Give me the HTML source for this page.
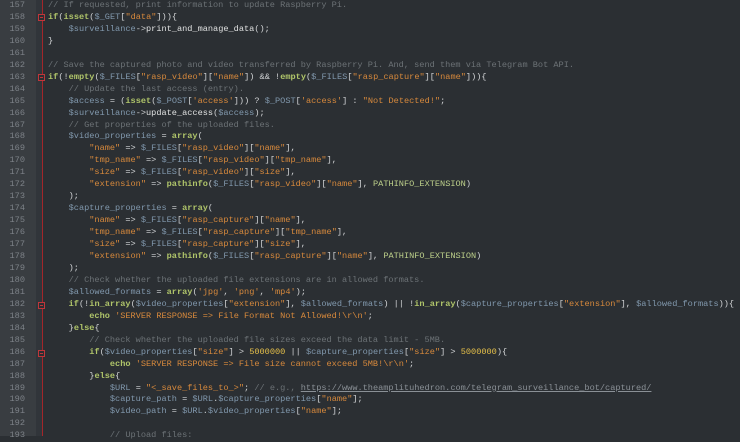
<!DOCTYPE html>
<html><head><meta charset="utf-8"><style>
html,body{margin:0;padding:0;width:740px;height:436px;overflow:hidden;background:#2b2f33;}
#g{position:absolute;left:0;top:0;width:36px;height:436px;background:#393d41;}
#g2{position:absolute;left:36px;top:0;width:6px;height:436px;background:#31353a;}
#rl{position:absolute;left:42px;top:0;width:1px;height:436px;background:#a3262a;}
.ln{position:absolute;left:0;width:25px;text-align:right;color:#7d8288;font:8.6px/11.95px "Liberation Mono",monospace;}
.fb{position:absolute;left:38px;width:7px;height:7px;border:1px solid #c0363a;background:#2b2f33;box-sizing:border-box;}
.fb:after{content:"";position:absolute;left:1px;top:2px;width:3px;height:1px;background:#c0363a;}
pre{position:absolute;left:48px;top:0;margin:0;font:8.6px/11.95px "Liberation Mono",monospace;color:#d2d4d6;tab-size:4;white-space:pre;}
.k{color:#b0c56a;font-weight:bold}.v{color:#8198ad}.s{color:#d7893c}.c{color:#6c7276}.n{color:#e8c24a}.f{color:#dfe0e0}.C{color:#bccf8a}.u{color:#8a9096;text-decoration:underline}
</style></head><body>
<div id="g"></div><div id="g2"></div><div id="rl"></div>
<div class="ln" style="top:0">157<br>158<br>159<br>160<br>161<br>162<br>163<br>164<br>165<br>166<br>167<br>168<br>169<br>170<br>171<br>172<br>173<br>174<br>175<br>176<br>177<br>178<br>179<br>180<br>181<br>182<br>183<br>184<br>185<br>186<br>187<br>188<br>189<br>190<br>191<br>192<br>193</div>
<div class="fb" style="top:14px"></div>
<div class="fb" style="top:74px"></div>
<div class="fb" style="top:302px"></div>
<div class="fb" style="top:350px"></div>
<pre><span class="c">// If requested, print information to update Raspberry Pi.</span>
<span class="k">if</span>(<span class="k">isset</span>(<span class="v">$_GET</span>[<span class="s">"data"</span>])){
	<span class="v">$surveillance</span>-&gt;<span class="f">print_and_manage_data</span>();
}

<span class="c">// Save the captured photo and video transferred by Raspberry Pi. And, send them via Telegram Bot API.</span>
<span class="k">if</span>(!<span class="k">empty</span>(<span class="v">$_FILES</span>[<span class="s">"rasp_video"</span>][<span class="s">"name"</span>]) &amp;&amp; !<span class="k">empty</span>(<span class="v">$_FILES</span>[<span class="s">"rasp_capture"</span>][<span class="s">"name"</span>])){
	<span class="c">// Update the last access (entry).</span>
	<span class="v">$access</span> = (<span class="k">isset</span>(<span class="v">$_POST</span>[<span class="s">'access'</span>])) ? <span class="v">$_POST</span>[<span class="s">'access'</span>] : <span class="s">"Not Detected!"</span>;
	<span class="v">$surveillance</span>-&gt;<span class="f">update_access</span>(<span class="v">$access</span>);
	<span class="c">// Get properties of the uploaded files.</span>
	<span class="v">$video_properties</span> = <span class="k">array</span>(
		<span class="s">"name"</span> =&gt; <span class="v">$_FILES</span>[<span class="s">"rasp_video"</span>][<span class="s">"name"</span>],
		<span class="s">"tmp_name"</span> =&gt; <span class="v">$_FILES</span>[<span class="s">"rasp_video"</span>][<span class="s">"tmp_name"</span>],
		<span class="s">"size"</span> =&gt; <span class="v">$_FILES</span>[<span class="s">"rasp_video"</span>][<span class="s">"size"</span>],
		<span class="s">"extension"</span> =&gt; <span class="k">pathinfo</span>(<span class="v">$_FILES</span>[<span class="s">"rasp_video"</span>][<span class="s">"name"</span>], <span class="C">PATHINFO_EXTENSION</span>)
	);
	<span class="v">$capture_properties</span> = <span class="k">array</span>(
		<span class="s">"name"</span> =&gt; <span class="v">$_FILES</span>[<span class="s">"rasp_capture"</span>][<span class="s">"name"</span>],
		<span class="s">"tmp_name"</span> =&gt; <span class="v">$_FILES</span>[<span class="s">"rasp_capture"</span>][<span class="s">"tmp_name"</span>],
		<span class="s">"size"</span> =&gt; <span class="v">$_FILES</span>[<span class="s">"rasp_capture"</span>][<span class="s">"size"</span>],
		<span class="s">"extension"</span> =&gt; <span class="k">pathinfo</span>(<span class="v">$_FILES</span>[<span class="s">"rasp_capture"</span>][<span class="s">"name"</span>], <span class="C">PATHINFO_EXTENSION</span>)
	);
	<span class="c">// Check whether the uploaded file extensions are in allowed formats.</span>
	<span class="v">$allowed_formats</span> = <span class="k">array</span>(<span class="s">'jpg'</span>, <span class="s">'png'</span>, <span class="s">'mp4'</span>);
	<span class="k">if</span>(!<span class="k">in_array</span>(<span class="v">$video_properties</span>[<span class="s">"extension"</span>], <span class="v">$allowed_formats</span>) || !<span class="k">in_array</span>(<span class="v">$capture_properties</span>[<span class="s">"extension"</span>], <span class="v">$allowed_formats</span>)){
		<span class="k">echo</span> <span class="s">'SERVER RESPONSE =&gt; File Format Not Allowed!\r\n'</span>;
	}<span class="k">else</span>{
		<span class="c">// Check whether the uploaded file sizes exceed the data limit - 5MB.</span>
		<span class="k">if</span>(<span class="v">$video_properties</span>[<span class="s">"size"</span>] &gt; <span class="n">5000000</span> || <span class="v">$capture_properties</span>[<span class="s">"size"</span>] &gt; <span class="n">5000000</span>){
			<span class="k">echo</span> <span class="s">'SERVER RESPONSE =&gt; File size cannot exceed 5MB!\r\n'</span>;
		}<span class="k">else</span>{
			<span class="v">$URL</span> = <span class="s">"&lt;_save_files_to_&gt;"</span>; <span class="c">// e.g., </span><span class="u">https://www.theamplituhedron.com/telegram_surveillance_bot/captured/</span>
			<span class="v">$capture_path</span> = <span class="v">$URL</span>.<span class="v">$capture_properties</span>[<span class="s">"name"</span>];
			<span class="v">$video_path</span> = <span class="v">$URL</span>.<span class="v">$video_properties</span>[<span class="s">"name"</span>];

			<span class="c">// Upload files:</span></pre>
</body></html>
